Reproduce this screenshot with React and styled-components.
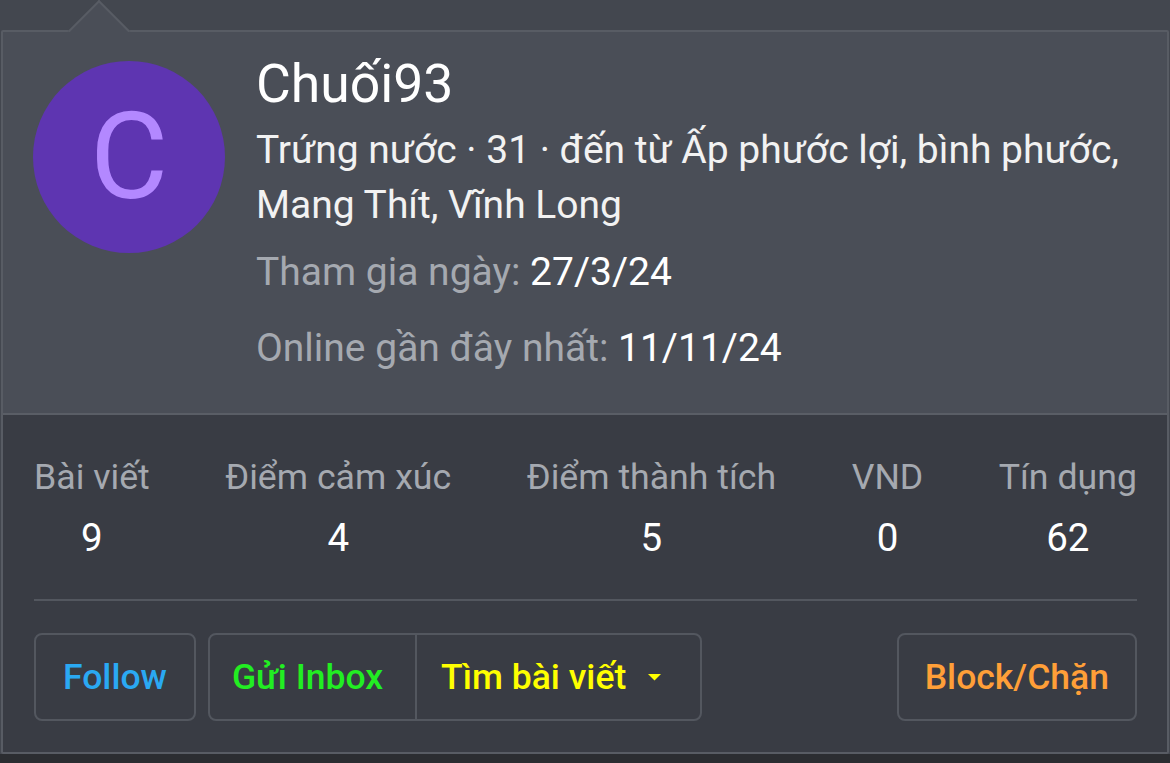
import React from "react";
import styled, { createGlobalStyle } from "styled-components";

const Global = createGlobalStyle`
  html, body { margin: 0; padding: 0; background: #2b2d31; }
  body { font-family: Roboto, "Noto Sans", "Liberation Sans", sans-serif; }
  * { box-sizing: border-box; }
`;

const Page = styled.div`
  background: #43474f;
  padding: 30px 1px 0 1px;
  width: 1170px;
`;

const Card = styled.div`
  position: relative;
  border: 2px solid #585c64;
  border-radius: 2px;
`;

const Arrow = styled.div`
  position: absolute;
  top: -23px;
  left: 74px;
  width: 44px;
  height: 44px;
  background: #4a4e57;
  border-top: 2px solid #585c64;
  border-left: 2px solid #585c64;
  transform: rotate(45deg);
`;

const Top = styled.div`
  position: relative;
  display: flex;
  gap: 31px;
  background: #4a4e57;
  padding: 29px 30px 30px 30px;
  border-bottom: 2px solid #5a5e66;
  height: 383px;
`;

const Avatar = styled.div`
  flex: 0 0 192px;
  width: 192px;
  height: 192px;
  border-radius: 50%;
  background: #5e35b1;
  color: #b388ff;
  display: flex;
  align-items: center;
  justify-content: center;
  font-size: 120px;
  line-height: 1;
  position: relative;
  z-index: 1;
`;

const Info = styled.div`
  display: flex;
  flex-direction: column;
`;

const Name = styled.div`
  font-size: 53.5px;
  line-height: 46px;
  color: #ffffff;
  margin-bottom: 16px;
`;

const Blurb = styled.div`
  font-size: 39px;
  line-height: 55px;
  color: #f2f2f2;
  margin-bottom: 12px;
`;

const Meta = styled.div`
  font-size: 39px;
  line-height: 55px;
  color: #a5a9b0;
  & + & {
    margin-top: 21px;
  }
`;

const Value = styled.span`
  color: #ffffff;
`;

const Bottom = styled.div`
  background: #393c44;
  padding: 40px 30px 31px 31px;
`;

const Stats = styled.div`
  display: flex;
  justify-content: space-between;
  padding-bottom: 39px;
  border-bottom: 2px solid #53575f;
`;

const Stat = styled.div`
  display: flex;
  flex-direction: column;
  align-items: center;
  gap: 17px;
`;

const StatLabel = styled.div`
  font-size: 35.7px;
  line-height: 44px;
  color: #a5a9b0;
`;

const StatValue = styled.div`
  font-size: 38.5px;
  line-height: 44px;
  color: #ffffff;
`;

const Actions = styled.div`
  display: flex;
  align-items: center;
  gap: 12px;
  margin-top: 32px;
`;

const Button = styled.div`
  height: 88px;
  display: flex;
  align-items: center;
  justify-content: center;
  padding: 0 ${(p) => p.$px}px;
  border: 2px solid #53575f;
  border-radius: 8px;
  font-size: 35.5px;
  font-weight: 500;
  color: ${(p) => p.$color};
`;

const Group = styled.div`
  display: flex;
  border: 2px solid #53575f;
  border-radius: 8px;
  height: 88px;
`;

const GroupItem = styled.div`
  display: flex;
  align-items: center;
  gap: 22px;
  padding: 0 ${(p) => p.$pr}px 0 ${(p) => p.$pl}px;
  font-size: 35.5px;
  font-weight: 500;
  color: ${(p) => p.$color};
  & + & {
    border-left: 2px solid #53575f;
  }
`;

const Spacer = styled.div`
  flex: 1;
`;

const Caret = () => (
  <svg width="13" height="7" viewBox="0 0 13 7">
    <path d="M0 0 L13 0 L6.5 6.5 Z" fill="#ffff00" />
  </svg>
);

const stats = [
  ["Bài viết", "9"],
  ["Điểm cảm xúc", "4"],
  ["Điểm thành tích", "5"],
  ["VND", "0"],
  ["Tín dụng", "62"],
];

export default function App() {
  return (
    <Page>
      <Global />
      <Card>
        <Arrow />
        <Top>
          <Avatar>C</Avatar>
          <Info>
            <Name>Chuối93</Name>
            <Blurb>
              Trứng nước · 31 · đến từ Ấp phước lợi, bình phước,
              <br />
              Mang Thít, Vĩnh Long
            </Blurb>
            <Meta>
              Tham gia ngày: <Value>27/3/24</Value>
            </Meta>
            <Meta>
              Online gần đây nhất: <Value>11/11/24</Value>
            </Meta>
          </Info>
        </Top>
        <Bottom>
          <Stats>
            {stats.map(([l, v]) => (
              <Stat key={l}>
                <StatLabel>{l}</StatLabel>
                <StatValue>{v}</StatValue>
              </Stat>
            ))}
          </Stats>
          <Actions>
            <Button $color="#2aa9f3" $px={27}>Follow</Button>
            <Group>
              <GroupItem $color="#22ee22" $pl={22} $pr={32}>Gửi Inbox</GroupItem>
              <GroupItem $color="#ffff00" $pl={24} $pr={39}>
                Tìm bài viết <Caret />
              </GroupItem>
            </Group>
            <Spacer />
            <Button $color="#ff9f38" $px={26}>Block/Chặn</Button>
          </Actions>
        </Bottom>
      </Card>
    </Page>
  );
}
